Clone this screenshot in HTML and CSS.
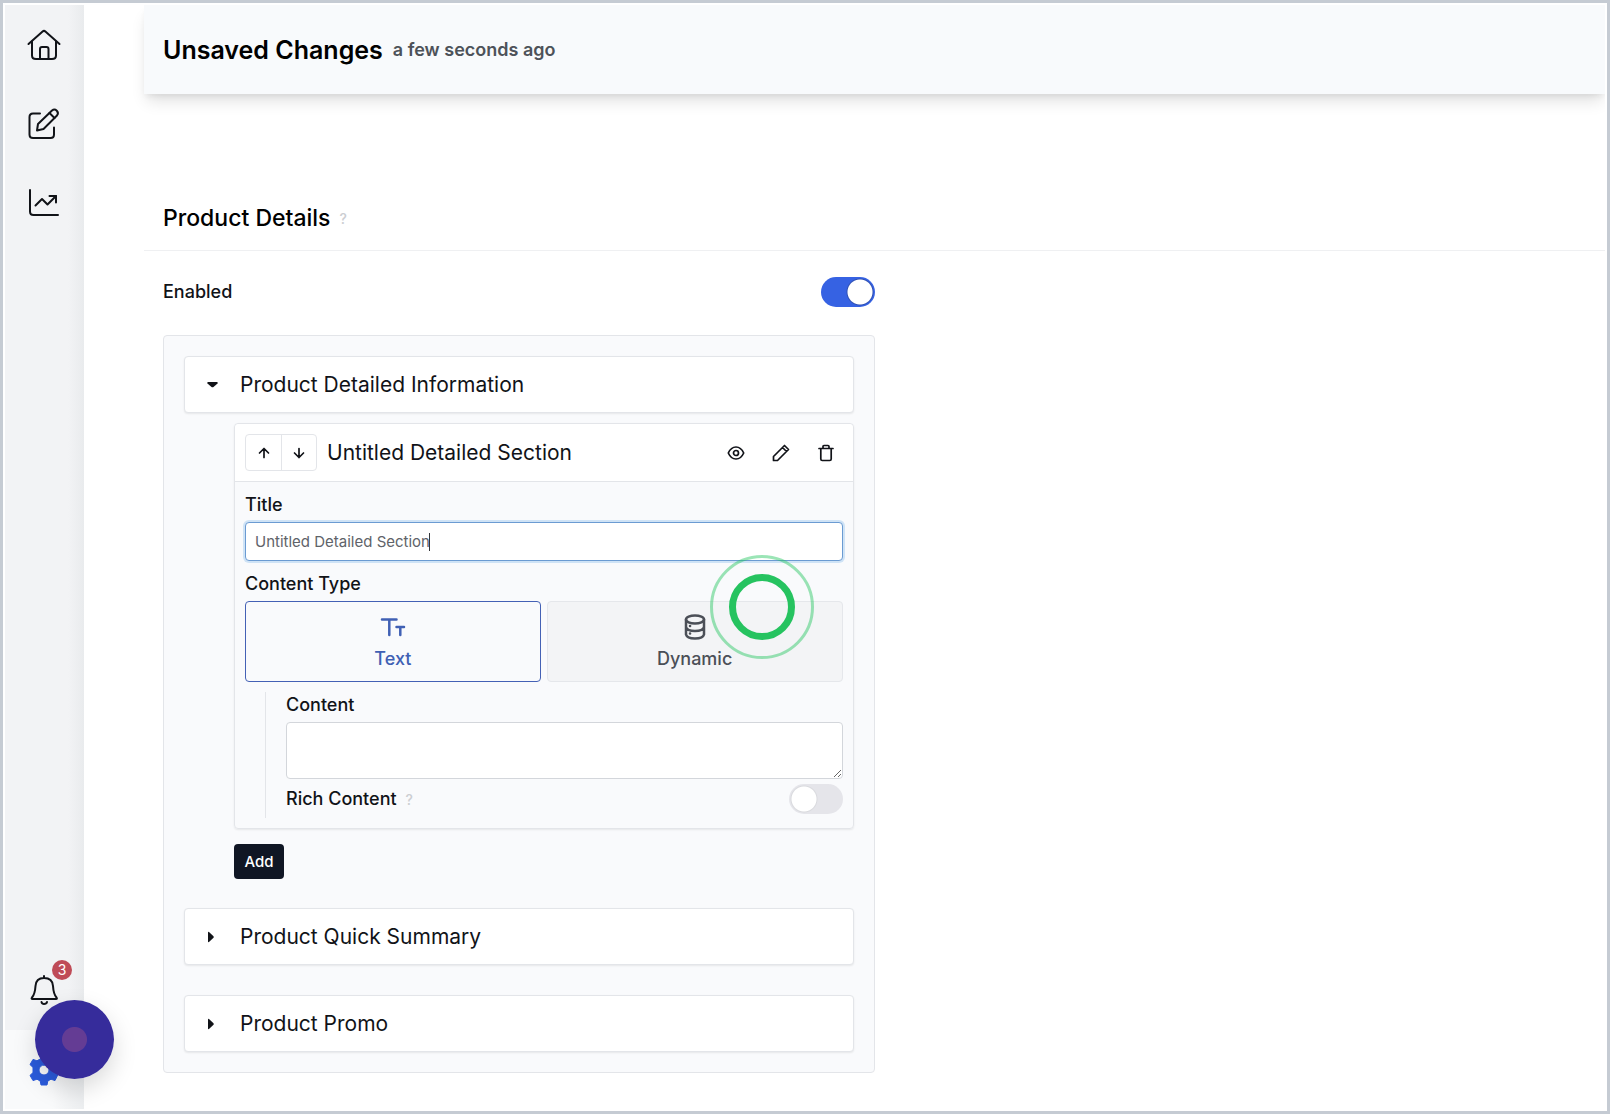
FILE: index.html
```html
<!DOCTYPE html>
<html lang="en">
<head>
    <meta charset="UTF-8">
    <meta name="viewport" content="width=device-width, initial-scale=1.0">
    <title>Product Details</title>
    <link rel="stylesheet" href="styles.css">
</head>
<body>
    <nav class="sidebar">
        <a href="#" class="nav-item" aria-label="Home">
            <svg width="34" height="34" viewBox="0 0 34 34">
                <path d="M1.5 16 L15.6 3.500 Q17 2.300 18.400 3.500 L32.5 16" />
                <path d="M5 13.500 V27.500 Q5 31 9 31 H25 Q29 31 29 27.500 V13.500" />
                <path d="M13 31 V21 Q13 19 15 19 H19.500 Q21.500 19 21.500 21 V31" />
            </svg>
        </a>
        <a href="#" class="nav-item" aria-label="Edit">
            <svg width="34" height="34" viewBox="0 0 34 34">
                <path d="M13 6.500 H6 Q2.500 6.500 2.500 10 V27.500 Q2.500 31 6 31 H23.500 Q27 31 27 27.500 V20.500" />
                <path d="M10 23.500 L11 17 L25 3.500 Q27.500 1.500 29.800 3.700 Q32 6 30 8.500 L16.500 22 Z" />
                <path d="M22.500 6 L27.500 11" />
            </svg>
        </a>
        <a href="#" class="nav-item" aria-label="Analytics">
            <svg width="34" height="34" viewBox="0 0 34 34">
                <path d="M3 4 V25.500 Q3 29 6.500 29 H31" />
                <path d="M8.500 19.500 L15 13 L20.500 18.500 L29 10" />
                <path d="M22.500 10 H29 V16.500" />
            </svg>
        </a>
        <a href="#" class="nav-item nav-bottom" aria-label="Notifications">
            <svg width="34" height="34" viewBox="0 0 34 34">
                <path d="M17 2 V4 M5.500 25 H29 Q30.500 25 29.500 23.500 Q26.500 20 26 12 Q25.500 4 17 4 Q9 4 8.500 12 Q8 20 5 23.500 Q4 25 5.500 25 Z" />
                <path d="M14.500 28 Q15 30 17 30 Q19.500 30 20 28" />
            </svg>
            <span class="badge">3</span>
        </a>
        <a href="#" class="nav-item active" aria-label="Settings">
            <svg class="gear" width="34" height="34" viewBox="0 0 34 34">
                <path fill-rule="evenodd" d="M14 2 H20 L20.800 6 L24 7.800 L28 6.400 L31 11.600 L28 14.400 V18.600 L31 21.400 L28 27.600 L24 26.200 L20.800 28 L20 32 H14 L13.200 28 L10 26.200 L6 27.600 L3 22.400 L6 19.600 V14.400 L3 11.600 L6 6.400 L10 7.800 L13.200 6 Z M17 12 A5 5 0 1 0 17 22 A5 5 0 1 0 17 12 Z" />
            </svg>
        </a>
        <div class="record"></div>
    </nav>
    <main class="main">
        <header class="header">
            <h1>Unsaved Changes</h1>
            <span class="time">a few seconds ago</span>
        </header>
        <section class="details">
            <h2>Product Details <span class="help">?</span></h2>
            <form class="settings">
                <div class="row">
                    <label for="enabled">Enabled</label>
                    <input type="checkbox" class="switch" id="enabled" checked>
                </div>
                <div class="panel">
                    <button type="button" class="accordion">
                        <svg width="20" height="20" viewBox="0 0 20 20"><path d="M6 7 H15 Q16.500 7.500 15.500 8.500 L11.500 12 Q10.500 12.500 9.500 12 L5.500 8.500 Q4.500 7.500 6 7 Z" /></svg>
                        Product Detailed Information
                    </button>
                    <div class="nested">
                        <div class="card">
                            <div class="card-header">
                                <div class="move">
                                    <button type="button" aria-label="Move up">
                                        <svg width="16" height="16" viewBox="0 0 16 16"><path d="M8 12.500 V3.500 M3.500 8 L8 3.500 L12.500 8" /></svg>
                                    </button>
                                    <button type="button" aria-label="Move down">
                                        <svg width="16" height="16" viewBox="0 0 16 16"><path d="M8 3.500 V12.500 M3.500 8 L8 12.500 L12.500 8" /></svg>
                                    </button>
                                </div>
                                <span class="card-title">Untitled Detailed Section</span>
                                <div class="actions">
                                    <button type="button" aria-label="Preview">
                                        <svg width="20" height="20" viewBox="0 0 20 20"><path d="M2.300 10 Q5 4 10 4 Q15 4 17.700 10 Q15 16 10 16 Q5 16 2.300 10 Z" /><circle cx="10" cy="10" r="2.500" /></svg>
                                    </button>
                                    <button type="button" aria-label="Rename">
                                        <svg width="20" height="20" viewBox="0 0 20 20"><path d="M2.500 17.500 V13.500 L13.500 2.500 L17.500 6.500 L6.500 17.500 Z M11.500 4.500 L15.500 8.500" /></svg>
                                    </button>
                                    <button type="button" aria-label="Delete">
                                        <svg width="20" height="20" viewBox="0 0 20 20"><path d="M3 5.500 H17 M4.800 5.500 V16 Q4.800 17.500 6.300 17.500 H13.700 Q15.200 17.500 15.200 16 V5.500 M7 5.500 V3.500 Q7 2.500 8 2.500 H12 Q13 2.500 13 3.500 V5.500" /></svg>
                                    </button>
                                </div>
                            </div>
                            <div class="card-body">
                                <label for="title">Title</label>
                                <div class="input-group">
                                    <input type="text" id="title" value="Untitled Detailed Section">
                                    <span class="caret"></span>
                                </div>
                                <span class="label">Content Type</span>
                                <div class="types">
                                    <button type="button" class="type selected">
                                        <svg width="28" height="28" viewBox="0 0 28 28"><path d="M3 6.500 H17.500 M10.300 6.500 V22 M17.500 14 H25 M21.300 14 V22" /></svg>
                                        Text
                                    </button>
                                    <button type="button" class="type">
                                        <svg width="28" height="28" viewBox="0 0 28 28"><ellipse cx="14" cy="6.500" rx="9" ry="4" /><path d="M5 6.500 V21.500 Q6 25.500 14 25.500 Q22 25.500 23 21.500 V6.500 M5 14 Q6 18 14 18 Q22 18 23 14 M9 13 H9.100 M9 20.500 H9.100" /></svg>
                                        Dynamic
                                    </button>
                                    <span class="click-ring"></span>
                                </div>
                                <div class="content-group">
                                    <label for="content">Content</label>
                                    <textarea id="content"></textarea>
                                    <div class="row">
                                        <label for="rich">Rich Content <span class="help">?</span></label>
                                        <input type="checkbox" class="switch" id="rich">
                                    </div>
                                </div>
                            </div>
                        </div>
                        <button type="button" class="add">Add</button>
                    </div>
                    <button type="button" class="accordion">
                        <svg width="20" height="20" viewBox="0 0 20 20"><path d="M6 5.500 Q6 4.500 7 5 L11.500 9.300 Q12 10 11.500 10.700 L7 15 Q6 15.500 6 14.500 Z" /></svg>
                        Product Quick Summary
                    </button>
                    <button type="button" class="accordion">
                        <svg width="20" height="20" viewBox="0 0 20 20"><path d="M6 5.500 Q6 4.500 7 5 L11.500 9.300 Q12 10 11.500 10.700 L7 15 Q6 15.500 6 14.500 Z" /></svg>
                        Product Promo
                    </button>
                </div>
            </form>
        </section>
    </main>
</body>
</html>
```

FILE: styles.css
```css
*, *::after {
    box-sizing: border-box;
    font-family: 'Inter', sans-serif;
}

body {
    display: flex;
    margin: 0;
    min-height: 100vh;
    padding: 2px;
    border: 3px solid #c5cbd3;
    background-color: #fff;
    color: #111318;
}

h1, h2 {
    margin: 0;
}

button {
    margin: 0;
    padding: 0;
    border: none;
    background: none;
    color: inherit;
}

svg {
    display: block;
    fill: none;
    stroke: currentColor;
    stroke-width: 2;
    stroke-linecap: round;
    stroke-linejoin: round;
}

.sidebar {
    position: relative;
    display: flex;
    flex-direction: column;
    flex: none;
    width: 79px;
    background: linear-gradient(to right, #f2f3f5 80%, #e9ebed);
}

.nav-item {
    position: relative;
    display: flex;
    align-items: center;
    justify-content: center;
    height: 79px;
    padding-right: 2px;
    color: #111318;
}

.nav-bottom {
    margin-top: auto;
}

.nav-item.active {
    background: linear-gradient(to right, #f9fafb 60%, #eceef0);
    color: #2b5bdc;
}

.gear {
    fill: currentColor;
    stroke-width: 1;
}

.badge {
    position: absolute;
    top: 9px;
    left: 47px;
    width: 20px;
    height: 20px;
    border-radius: 50%;
    background-color: #bf4b57;
    color: #fff;
    font-size: 14px;
    line-height: 20px;
    text-align: center;
}

.record {
    position: absolute;
    left: 30px;
    bottom: 30px;
    width: 79px;
    height: 79px;
    border-radius: 50%;
    background: radial-gradient(circle, #643c94 12px, #362c9b 13px);
    box-shadow: 0 10px 24px rgba(0, 0, 0, 0.15);
}

.main {
    flex: 1;
    margin-left: 60px;
}

.header {
    display: flex;
    align-items: center;
    gap: 10px;
    height: 89px;
    padding: 0 19px;
    background-color: #f8fafc;
    box-shadow: 0 10px 15px -3px rgba(0, 0, 0, 0.12), 0 4px 6px -2px rgba(0, 0, 0, 0.07);
    clip-path: inset(0 0 -30px -30px);
}

.header h1 {
    font-size: 25px;
    font-weight: 600;
    color: #000;
}

.time {
    font-size: 18px;
    font-weight: 600;
    color: #4d5259;
}

.details h2 {
    display: flex;
    align-items: center;
    height: 65px;
    margin-top: 92px;
    padding: 0 19px;
    border-bottom: 1px solid #eff0f2;
    font-size: 23px;
    font-weight: 500;
    color: #000;
}

.help {
    margin-left: 9px;
    font-size: 14px;
    font-weight: 500;
    color: #ccced2;
}

label .help {
    margin-left: 4px;
}

.settings {
    width: 50%;
    padding: 0 0 0 19px;
}

.row {
    display: flex;
    align-items: center;
    justify-content: space-between;
}

.settings > .row {
    height: 82px;
    margin-bottom: 2px;
}

label, .label {
    display: block;
    font-size: 18px;
    font-weight: 500;
    line-height: 24px;
}

.switch {
    appearance: none;
    width: 54px;
    height: 30px;
    margin: 0;
    border-radius: 15px;
    background: radial-gradient(circle at 15px 15px, #fff 12px, #d9dade 13px, #e5e5ea 14px);
}

.switch:checked {
    background: radial-gradient(circle at 39px 15px, #fff 12px, #2f50b4 13px, #3662e3 14px);
}

.panel {
    padding: 20px;
    border: 1px solid #e3e5e9;
    border-radius: 4px;
    background-color: #f9fafc;
}

.accordion {
    display: flex;
    align-items: center;
    gap: 18px;
    width: 100%;
    height: 57px;
    padding-left: 17px;
    border: 1px solid #e3e5e9;
    border-radius: 4px;
    background-color: #fff;
    box-shadow: 0 1px 2px rgba(0, 0, 0, 0.08);
    font-size: 21px;
}

.accordion + .accordion {
    margin-top: 30px;
}

.accordion svg {
    fill: currentColor;
    stroke: none;
}

.nested {
    margin: 10px 0 29px 50px;
}

.card {
    border: 1px solid #e3e5e9;
    border-radius: 4px;
    box-shadow: 0 1px 2px rgba(0, 0, 0, 0.08);
}

.card-header {
    display: flex;
    align-items: center;
    height: 58px;
    padding: 0 10px;
    border-bottom: 1px solid #e3e5e9;
    border-radius: 4px 4px 0 0;
    background-color: #fff;
}

.card-header svg {
    stroke-width: 1.7;
}

.move {
    display: flex;
    border: 1px solid #e3e5e9;
    border-radius: 4px;
}

.move button {
    display: flex;
    align-items: center;
    justify-content: center;
    width: 35px;
    height: 35px;
}

.move button + button {
    border-left: 1px solid #e3e5e9;
}

.card-title {
    margin-left: 10px;
    font-size: 21px;
}

.actions {
    display: flex;
    gap: 25px;
    margin-left: auto;
    padding-right: 7px;
}

.card-body {
    padding: 11px 10px 10px;
}

.input-group {
    position: relative;
    margin: 5px 0 11px;
}

input[type="text"] {
    display: block;
    width: 100%;
    height: 39px;
    padding: 0 9px;
    border: 1px solid #6b9bd2;
    border-radius: 4px;
    outline: none;
    background-color: #fff;
    box-shadow: 0 0 0 2px #cfe3f6;
    color: #606369;
    font-size: 15px;
}

.caret {
    position: absolute;
    top: 11px;
    left: 184px;
    width: 1px;
    height: 18px;
    background-color: #33363b;
}

.types {
    position: relative;
    display: grid;
    grid-template-columns: 1fr 1fr;
    gap: 6px;
    margin-top: 5px;
}

.type {
    display: flex;
    flex-direction: column;
    align-items: center;
    justify-content: center;
    gap: 6px;
    height: 81px;
    border: 1px solid #e5e7eb;
    border-radius: 4px;
    background-color: #f3f4f6;
    color: #4b4f57;
    font-size: 18px;
    font-weight: 500;
    line-height: 24px;
}

.type.selected {
    border-color: #4461b5;
    background-color: #f9fafc;
    color: #4060b4;
}

.type svg {
    stroke-width: 2.5;
}

.click-ring {
    position: absolute;
    top: -46px;
    right: 29px;
    width: 104px;
    height: 104px;
    border: 3px solid rgba(34, 197, 94, 0.45);
    border-radius: 50%;
}

.click-ring::after {
    content: '';
    position: absolute;
    top: 16px;
    left: 16px;
    width: 66px;
    height: 66px;
    border: 7px solid #26c360;
    border-radius: 50%;
}

.content-group {
    margin: 10px 0 0 20px;
    padding: 1px 0 4px 20px;
    border-left: 1px solid #e3e5e9;
}

textarea {
    display: block;
    width: 100%;
    height: 57px;
    margin: 5px 0;
    border: 1px solid #d3d6db;
    border-radius: 4px;
    background-color: #fff;
    resize: vertical;
}

.add {
    width: 50px;
    height: 35px;
    margin-top: 15px;
    border-radius: 4px;
    background-color: #101624;
    color: #fff;
    font-size: 15px;
    font-weight: 500;
}
```
